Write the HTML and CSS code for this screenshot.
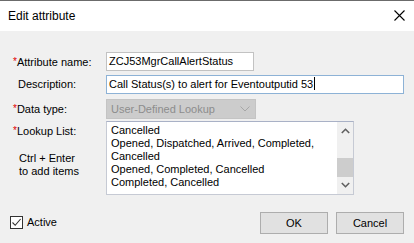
FILE: index.html
```html
<!DOCTYPE html>
<html>
<head>
<meta charset="utf-8">
<link rel="stylesheet" href="styles.css">
</head>
<body>
<div class="window">
  <div class="titlebar">
    <span class="title">Edit attribute</span>
    <svg class="close" width="11" height="11" viewBox="0 0 11 11"><path d="M0.5 0.5 L10.5 10.5 M10.5 0.5 L0.5 10.5" stroke="#000" stroke-width="1.1" fill="none"/></svg>
  </div>
  <div class="body">
    <div class="form">
      <div class="row r-name">
        <div class="lbl"><span class="req">*</span>Attribute name:</div>
        <div class="field input name">ZCJ53MgrCallAlertStatus</div>
      </div>
      <div class="row r-desc">
        <div class="lbl plain">Description:</div>
        <div class="field input desc focused">Call Status(s) to alert for Eventoutputid 53<span class="caret"></span></div>
      </div>
      <div class="row r-type">
        <div class="lbl"><span class="req">*</span>Data type:</div>
        <div class="field combo"><span>User-Defined Lookup</span>
          <svg class="chev" width="10" height="6" viewBox="0 0 10 6"><path d="M0.5 0.5 L5 5 L9.5 0.5" stroke="#a6a6a6" stroke-width="1" fill="none"/></svg>
        </div>
      </div>
      <div class="row r-list">
        <div class="lbl-col">
          <div class="lbl top"><span class="req">*</span>Lookup List:</div>
          <div class="hint">Ctrl + Enter<br>to add items</div>
        </div>
        <div class="field list">
          <div class="list-text">
            <div>Cancelled</div>
            <div>Opened, Dispatched, Arrived, Completed,</div>
            <div>Cancelled</div>
            <div>Opened, Completed, Cancelled</div>
            <div>Completed, Cancelled</div>
          </div>
          <div class="scrollbar">
            <svg class="arrow" width="9" height="6" viewBox="0 0 9 6"><path d="M0.8 5 L4.5 1.3 L8.2 5" stroke="#606060" stroke-width="1.6" fill="none"/></svg>
            <div class="track"><div class="thumb"></div></div>
            <svg class="arrow" width="9" height="6" viewBox="0 0 9 6"><path d="M0.8 1 L4.5 4.7 L8.2 1" stroke="#606060" stroke-width="1.6" fill="none"/></svg>
          </div>
        </div>
      </div>
    </div>
    <div class="footer">
      <div class="check">
        <span class="box"><svg width="11" height="11" viewBox="0 0 11 11"><path d="M1.5 5.5 L4.2 8.3 L9.6 2" stroke="#333" stroke-width="1.1" fill="none"/></svg></span>
        <span class="check-label">Active</span>
      </div>
      <div class="buttons">
        <div class="btn">OK</div>
        <div class="btn">Cancel</div>
      </div>
    </div>
  </div>
</div>
</body>
</html>
```
FILE: styles.css
```css
html, body {
  margin: 0;
  padding: 0;
}
body {
  font-family: "Liberation Sans", Arial, sans-serif;
  font-size: 11px;
  color: #000;
  background: #f0f0f0;
}
.window {
  width: 414px;
  height: 243px;
  display: flex;
  flex-direction: column;
  border-top: 1px solid #6b6b6b;
  box-sizing: border-box;
  overflow: hidden;
}
.titlebar {
  height: 30px;
  background: #fff;
  display: flex;
  align-items: center;
  justify-content: space-between;
  padding: 0 9px 0 8px;
  flex: none;
}
.title {
  font-size: 12px;
  margin-top: -1px;
}
.close {
  display: block;
  margin-top: -1px;
}
.body {
  flex: 1;
  background: #f0f0f0;
  display: flex;
  flex-direction: column;
}
.form {
  display: flex;
  flex-direction: column;
  padding-top: 21px;
}
.row {
  display: grid;
  grid-template-columns: 106px auto;
  align-items: center;
}
.r-desc { margin-top: 4px; }
.r-type { margin-top: 5px; }
.r-list { margin-top: 2px; align-items: start; }
.lbl {
  padding-left: 13px;
  line-height: 13px;
  white-space: nowrap;
}
.lbl.plain { padding-left: 18px; }
.req {
  color: #e00000;
  font-size: 10px;
  vertical-align: 1px;
}
.field {
  box-sizing: border-box;
  white-space: nowrap;
}
.input {
  height: 19px;
  background: #fff;
  border: 1px solid #c2c2c2;
  line-height: 17px;
  padding-left: 2px;
}
.input.name { width: 148px; }
.input.desc { width: 298px; }
.input.focused { border-color: #8db2d6; }
.caret {
  display: inline-block;
  width: 1px;
  height: 13px;
  background: #000;
  vertical-align: -2px;
  margin-left: 1px;
}
.combo {
  width: 150px;
  height: 20px;
  background: #cccccc;
  border: 1px solid #c4c4c4;
  color: #8c8c8c;
  display: flex;
  align-items: center;
  justify-content: space-between;
  padding: 0 5px 0 4px;
}
.chev { display: block; }
.lbl-col {
  padding-top: 3px;
}
.hint {
  padding-left: 19px;
  margin-top: 14px;
  line-height: 13px;
}
.list {
  width: 248px;
  height: 74px;
  background: #fff;
  border: 1px solid #c6cad4;
  border-top-color: #a9b1c6;
  display: flex;
}
.list-text {
  flex: 1;
  padding: 2px 0 0 4px;
  line-height: 13px;
  overflow: hidden;
}
.scrollbar {
  width: 16px;
  background: #f0f0f0;
  display: flex;
  flex-direction: column;
  align-items: center;
}
.arrow {
  display: block;
  margin: 6px 0;
  flex: none;
}
.track {
  flex: 1;
  width: 100%;
  position: relative;
}
.thumb {
  position: absolute;
  left: 0;
  right: 0;
  top: 18px;
  height: 19px;
  background: #cdcdcd;
}
.footer {
  margin-top: 17px;
  display: flex;
  justify-content: space-between;
  align-items: center;
  padding: 0 10px;
}
.check {
  display: flex;
  align-items: center;
  margin-top: -2px;
}
.box {
  width: 13px;
  height: 13px;
  box-sizing: border-box;
  border: 1px solid #333;
  background: #fff;
  display: flex;
  align-items: center;
  justify-content: center;
}
.box svg { display: block; }
.check-label {
  margin-left: 4px;
  font-size: 11px;
}
.buttons {
  display: flex;
  gap: 8px;
}
.btn {
  width: 68px;
  height: 22px;
  box-sizing: border-box;
  background: #e1e1e1;
  border: 1px solid #adadad;
  display: flex;
  align-items: center;
  justify-content: center;
}
```
